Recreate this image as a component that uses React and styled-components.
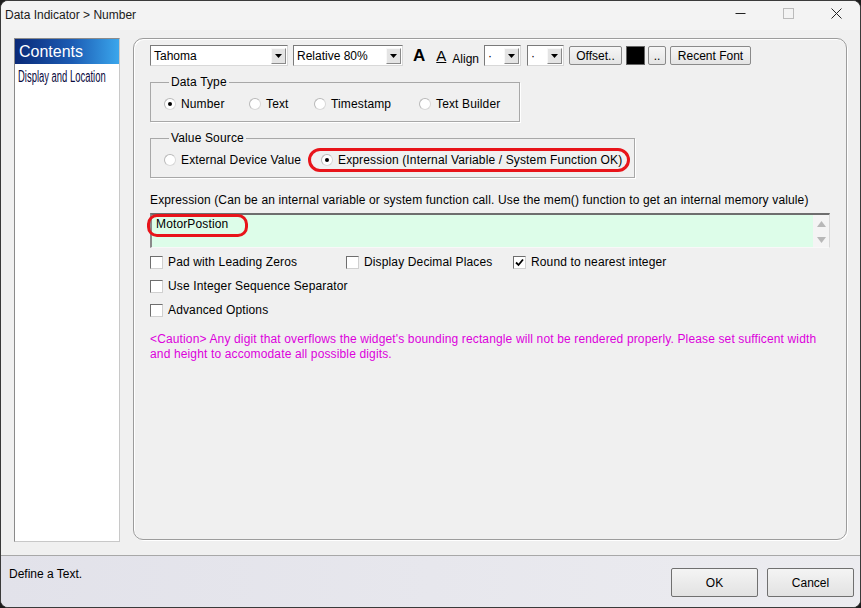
import React from "react";
import styled, { createGlobalStyle } from "styled-components";

const GlobalStyle = createGlobalStyle`
  html, body {
    margin: 0;
    padding: 0;
    background: #1c1c1c;
  }
  body {
    font-family: "Liberation Sans", Arial, sans-serif;
    font-size: 12px;
    color: #000;
  }
`;

function Radio({ checked, width, children }) {
  return (
    <RadioItem $w={width}>
      <RadioDot checked={checked} />
      <span>{children}</span>
    </RadioItem>
  );
}

function Check({ checked, children, width }) {
  return (
    <CheckItem $w={width}>
      <CheckBox>
        {checked && (
          <svg width="9" height="9" viewBox="0 0 9 9">
            <path d="M1 4.5 L3.5 7 L8 1.5" fill="none" stroke="#000" strokeWidth="1.8" />
          </svg>
        )}
      </CheckBox>
      <span>{children}</span>
    </CheckItem>
  );
}

function Select({ width, value, ml }) {
  return (
    <SelectBox $w={width} $ml={ml}>
      <SelectValue>{value}</SelectValue>
      <SelectArrow>
        <svg width="7" height="4" viewBox="0 0 7 4">
          <path d="M0 0 H7 L3.5 4 Z" fill="#000" />
        </svg>
      </SelectArrow>
    </SelectBox>
  );
}

function App() {
  return (
    <>
      <GlobalStyle />
      <Window>
        <TitleBar>
          <Title>Data Indicator &gt; Number</Title>
          <WinControls>
            <WinButton>
              <svg width="11" height="11" viewBox="0 0 11 11">
                <path d="M0.5 5.5 H10.5" stroke="#222" strokeWidth="1" />
              </svg>
            </WinButton>
            <WinButton>
              <svg width="11" height="11" viewBox="0 0 11 11">
                <rect x="0.5" y="0.5" width="10" height="10" fill="none" stroke="#bbb" strokeWidth="1" />
              </svg>
            </WinButton>
            <WinButton>
              <svg width="11" height="11" viewBox="0 0 11 11">
                <path d="M0.5 0.5 L10.5 10.5 M10.5 0.5 L0.5 10.5" stroke="#222" strokeWidth="1" />
              </svg>
            </WinButton>
          </WinControls>
        </TitleBar>

        <Body>
          <SideList>
            <SideHeader>Contents</SideHeader>
            <SideItem>
              <span>Display and Location</span>
            </SideItem>
          </SideList>

          <Panel>
            <Toolbar>
              <Select width={138} value="Tahoma" />
              <Select width={110} value="Relative 80%" ml={1} />
              <BoldA>A</BoldA>
              <UnderA>A</UnderA>
              <AlignLabel>Align</AlignLabel>
              <Select width={37} value="·" />
              <Select width={37} value="·" ml={2} />
              <ToolButton width={53} ml={1}>Offset..</ToolButton>
              <ColorSwatch />
              <ToolButton width={18}>..</ToolButton>
              <ToolButton width={81}>Recent Font</ToolButton>
            </Toolbar>

            <Group width={370}>
              <Legend>Data Type</Legend>
              <RadioRow>
                <Radio checked width={85}>Number</Radio>
                <Radio width={65}>Text</Radio>
                <Radio width={105}>Timestamp</Radio>
                <Radio>Text Builder</Radio>
              </RadioRow>
            </Group>

            <Group width={485}>
              <Legend>Value Source</Legend>
              <RadioRow>
                <Radio width={157}>External Device Value</Radio>
                <Marked>
                  <Radio checked>Expression (Internal Variable / System Function OK)</Radio>
                </Marked>
              </RadioRow>
            </Group>

            <ExprLabel>
              Expression (Can be an internal variable or system function call. Use the mem() function to get an internal memory valule)
            </ExprLabel>
            <ExprBox>
              <ExprText>MotorPostion</ExprText>
              <ScrollTrack>
                <svg width="9" height="6" viewBox="0 0 9 6">
                  <path d="M0 6 L4.5 0 L9 6 Z" fill="#b8b8b8" />
                </svg>
                <svg width="9" height="6" viewBox="0 0 9 6">
                  <path d="M0 0 L4.5 6 L9 0 Z" fill="#b8b8b8" />
                </svg>
              </ScrollTrack>
            </ExprBox>

            <CheckRow $first>
              <Check width={196}>Pad with Leading Zeros</Check>
              <Check width={167}>Display Decimal Places</Check>
              <Check checked>Round to nearest integer</Check>
            </CheckRow>
            <CheckRow>
              <Check>Use Integer Sequence Separator</Check>
            </CheckRow>
            <CheckRow>
              <Check>Advanced Options</Check>
            </CheckRow>

            <Caution>
              &lt;Caution&gt; Any digit that overflows the widget's bounding rectangle will not be rendered properly. Please set sufficent width and height to accomodate all possible digits.
            </Caution>
          </Panel>
        </Body>

        <StatusBar>
          <StatusText>Define a Text.</StatusText>
          <DialogButtons>
            <DialogButton>OK</DialogButton>
            <DialogButton>Cancel</DialogButton>
          </DialogButtons>
        </StatusBar>
      </Window>
    </>
  );
}

export default App;

// window frame
const Window = styled.div`
  width: 861px;
  height: 608px;
  box-sizing: border-box;
  border: 1px solid #3a3a3a;
  border-radius: 8px;
  overflow: hidden;
  display: flex;
  flex-direction: column;
  background: #f0f0f0;
`;

const TitleBar = styled.div`
  height: 29px;
  display: flex;
  align-items: center;
  justify-content: space-between;
  background: #f3f3f3;
  padding-left: 4px;
`;

const Title = styled.div`
  font-size: 12px;
  color: #1a1a1a;
  margin-top: -2px;
`;

const WinControls = styled.div`
  display: flex;
  height: 100%;
`;

const WinButton = styled.div`
  width: 48px;
  display: flex;
  align-items: center;
  justify-content: center;
  margin-top: -4px;
`;

const Body = styled.div`
  flex: 1;
  display: flex;
  gap: 13px;
  padding: 8px 14px 13px 13px;
  border-bottom: 1px solid #a8a8a8;
`;

// left list
const SideList = styled.div`
  width: 104px;
  background: #fff;
  border: 1px solid #c8c8c8;
  border-top-color: #8a8a8a;
  border-left-color: #8a8a8a;
  display: flex;
  flex-direction: column;
`;

const SideHeader = styled.div`
  height: 25px;
  display: flex;
  align-items: center;
  padding-left: 4px;
  color: #fff;
  font-size: 16px;
  background: linear-gradient(90deg, #0a2a78 0%, #1c5cb4 55%, #3aa6ec 100%);
`;

const SideItem = styled.div`
  padding: 4px 0 0 3px;
  font-size: 16px;
  line-height: 18px;
  color: #0a0a40;
  white-space: nowrap;
  span {
    display: inline-block;
    transform: scaleX(0.59);
    transform-origin: left center;
  }
`;

// right panel
const Panel = styled.div`
  flex: 1;
  margin-bottom: 2px;
  border: 1px solid #9c9c9c;
  box-shadow: inset 1px 1px 0 #fff, 1px 1px 0 #fff;
  border-radius: 10px;
  padding: 6px 16px 0 16px;
  display: flex;
  flex-direction: column;
  align-items: flex-start;
  letter-spacing: 0.14px;
`;

const Toolbar = styled.div`
  display: flex;
  align-items: center;
  gap: 4px;
  height: 21px;
  letter-spacing: 0;
`;

const SelectBox = styled.div`
  flex-shrink: 0;
  width: ${(p) => p.$w}px;
  margin-left: ${(p) => p.$ml || 0}px;
  height: 21px;
  box-sizing: border-box;
  background: #fff;
  border: 1px solid #7a7a7a;
  border-right-color: #d8d8d8;
  border-bottom-color: #d8d8d8;
  display: flex;
  align-items: center;
  padding: 1px;
`;

const SelectValue = styled.div`
  flex: 1;
  padding-left: 2px;
  font-size: 12px;
  white-space: nowrap;
  overflow: hidden;
`;

const SelectArrow = styled.div`
  flex-shrink: 0;
  width: 15px;
  height: 16px;
  background: #e4e4e4;
  border: 1px solid #f8f8f8;
  border-right-color: #8a8a8a;
  border-bottom-color: #8a8a8a;
  box-sizing: border-box;
  display: flex;
  align-items: center;
  justify-content: center;
`;

const BoldA = styled.div`
  font-size: 17px;
  font-weight: bold;
  margin: 0 7px 0 6px;
`;

const UnderA = styled.div`
  font-size: 15px;
  text-decoration: underline;
  text-underline-offset: 1px;
  margin-right: 2px;
`;

const AlignLabel = styled.div`
  font-size: 12px;
  margin-top: 6px;
  margin-right: 1px;
`;

const ToolButton = styled.div`
  flex-shrink: 0;
  width: ${(p) => p.width}px;
  margin-left: ${(p) => p.ml || 0}px;
  height: 19px;
  box-sizing: border-box;
  border: 1px solid #8a8a8a;
  border-radius: 2px;
  background: linear-gradient(#f6f6f6, #e4e4e4);
  display: flex;
  align-items: center;
  justify-content: center;
  font-size: 12px;
`;

const ColorSwatch = styled.div`
  flex-shrink: 0;
  width: 19px;
  height: 19px;
  margin-right: -1px;
  background: #000;
  box-sizing: border-box;
  border: 1px solid #666;
`;

// group boxes
const Group = styled.fieldset`
  width: ${(p) => p.width}px;
  box-sizing: border-box;
  margin: 9px 0 0 0;
  padding: 8px 0 10px 13px;
  border: 1px solid #a8a8a8;
  box-shadow: 1px 1px 0 #fff;
`;

const Legend = styled.legend`
  padding: 0 2px;
  margin-left: 5px;
  font-size: 12px;
`;

const RadioRow = styled.div`
  display: flex;
`;

const RadioItem = styled.div`
  display: flex;
  align-items: center;
  gap: 5px;
  white-space: nowrap;
  width: ${(p) => (p.$w ? `${p.$w}px` : "auto")};
`;

const RadioDot = styled.div`
  width: 12px;
  height: 12px;
  box-sizing: border-box;
  border-radius: 50%;
  border: 1px solid #b8b8b8;
  border-bottom-color: #d8d8d8;
  border-right-color: #d8d8d8;
  background: #fff;
  display: flex;
  align-items: center;
  justify-content: center;
  &::after {
    content: "";
    width: 4px;
    height: 4px;
    border-radius: 50%;
    background: ${(p) => (p.checked ? "#000" : "transparent")};
  }
`;

const Marked = styled.div`
  position: relative;
  &::after {
    content: "";
    position: absolute;
    left: -13px;
    right: -8px;
    top: -5px;
    bottom: -5px;
    border: 3px solid #e8141a;
    border-radius: 12px;
  }
`;

// expression
const ExprLabel = styled.div`
  margin-top: 15px;
  white-space: nowrap;
  font-size: 12px;
`;

const ExprBox = styled.div`
  position: relative;
  width: 680px;
  height: 35px;
  margin-top: 6px;
  box-sizing: border-box;
  background: #ddfde9;
  border-top: 2px solid #6e6e6e;
  border-left: 2px solid #8a8a8a;
  border-right: 1px solid #d8d8d8;
  border-bottom: 1px solid #f8f8f8;
  display: flex;
`;

const ExprText = styled.div`
  flex: 1;
  padding: 2px 0 0 4px;
  font-size: 12px;
  &::after {
    content: "";
    position: absolute;
    left: -5px;
    top: -1px;
    width: 95px;
    height: 17px;
    border: 3px solid #e8141a;
    border-radius: 10px;
  }
`;

const ScrollTrack = styled.div`
  width: 16px;
  background: #f4f4f4;
  display: flex;
  flex-direction: column;
  align-items: center;
  justify-content: space-between;
  padding: 6px 0 4px;
  box-sizing: border-box;
`;

// checkboxes
const CheckRow = styled.div`
  display: flex;
  margin-top: ${(p) => (p.$first ? 7 : 10)}px;
`;

const CheckItem = styled.div`
  display: flex;
  align-items: center;
  gap: 5px;
  white-space: nowrap;
  height: 14px;
  width: ${(p) => (p.$w ? `${p.$w}px` : "auto")};
`;

const CheckBox = styled.div`
  width: 13px;
  height: 13px;
  box-sizing: border-box;
  background: #fff;
  border: 1px solid #6e6e6e;
  border-right-color: #d0d0d0;
  border-bottom-color: #d0d0d0;
  display: flex;
  align-items: center;
  justify-content: center;
`;

const Caution = styled.div`
  margin-top: 15px;
  width: 680px;
  color: #dc00dc;
  font-size: 12px;
  line-height: 15px;
`;

// bottom bar
const StatusBar = styled.div`
  height: 51px;
  display: flex;
  align-items: center;
  justify-content: space-between;
  padding: 0 6px 0 8px;
  background: linear-gradient(90deg, #e2e2ea, #ececf0);
`;

const StatusText = styled.div`
  font-size: 12px;
  margin-top: -16px;
`;

const DialogButtons = styled.div`
  display: flex;
  gap: 9px;
  margin-top: 2px;
`;

const DialogButton = styled.div`
  width: 87px;
  height: 29px;
  box-sizing: border-box;
  border: 1px solid #707070;
  border-radius: 2px;
  background: linear-gradient(#f4f4f4, #e2e2e2);
  display: flex;
  align-items: center;
  justify-content: center;
  font-size: 12px;
`;
